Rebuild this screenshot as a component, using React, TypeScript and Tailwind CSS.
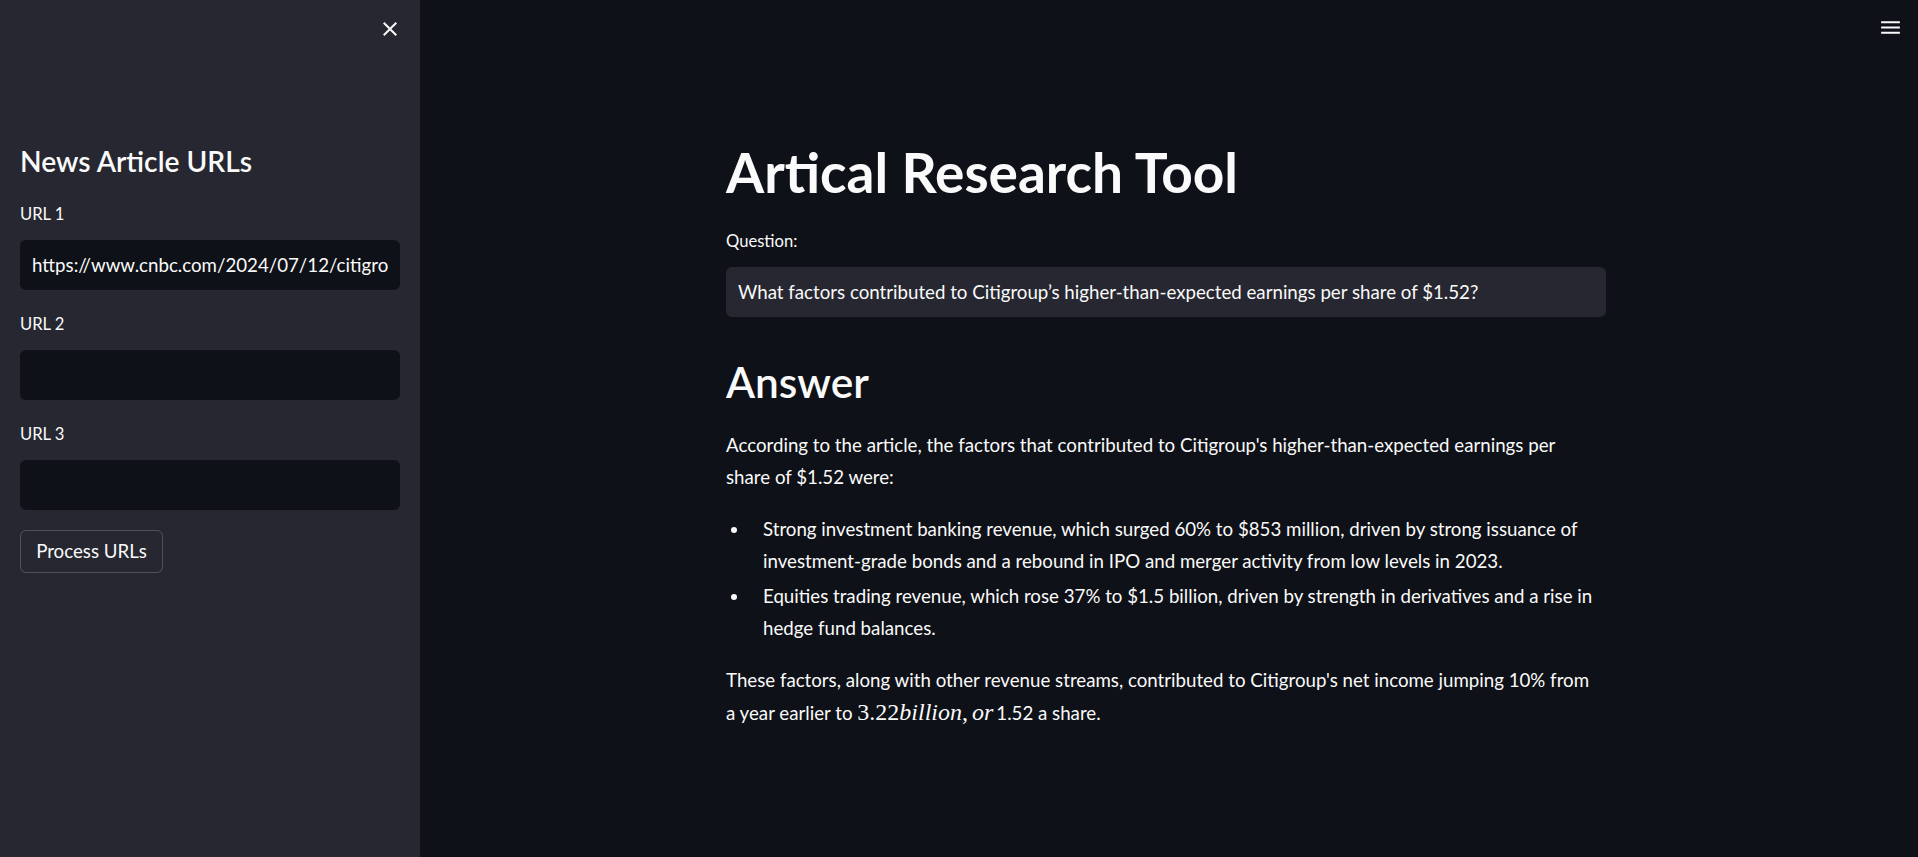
import React from 'react';

const URL_FIELDS = [
  { label: 'URL 1', value: 'https://www.cnbc.com/2024/07/12/citigroup-c-earnings-q2-2024.html' },
  { label: 'URL 2', value: '' },
  { label: 'URL 3', value: '' },
];

const BULLETS = [
  [
    'Strong investment banking revenue, which surged 60% to $853 million, driven by strong issuance of',
    'investment-grade bonds and a rebound in IPO and merger activity from low levels in 2023.',
  ],
  [
    'Equities trading revenue, which rose 37% to $1.5 billion, driven by strength in derivatives and a rise in',
    'hedge fund balances.',
  ],
];

function CloseIcon() {
  return (
    <svg width="24" height="24" viewBox="0 0 24 24" fill="#fafafa">
      <path d="M19 6.41L17.59 5 12 10.59 6.41 5 5 6.41 10.59 12 5 17.59 6.41 19 12 13.41 17.59 19 19 17.59 13.41 12z" />
    </svg>
  );
}

function MenuIcon() {
  return (
    <svg width="25" height="25" viewBox="0 0 24 24" fill="#fafafa">
      <path d="M3 18h18v-2H3v2zm0-5h18v-2H3v2zm0-7v2h18V6H3z" />
    </svg>
  );
}

export default function App() {
  return (
    <div className="flex h-[857px] w-full overflow-hidden bg-[#0e1117] font-['Lato',sans-serif] text-[#fafafa]">
      {/* Sidebar */}
      <aside className="flex w-[420px] shrink-0 flex-col bg-[#262730] px-5">
        <div className="-mr-[2px] flex justify-end pt-[17px]">
          <CloseIcon />
        </div>

        <h2 className="mt-[102px] text-[28.2px] font-semibold leading-[36px]">News Article URLs</h2>

        <div className="mt-[25px] flex flex-col gap-6">
          {URL_FIELDS.map((f) => (
            <div key={f.label} className="flex flex-col gap-[15px]">
              <label className="text-[16.6px] leading-[21px]">{f.label}</label>
              <div className="flex h-[50px] items-center rounded-[6px] bg-[#0e1117] px-3">
                <div className="flex-1 overflow-hidden whitespace-nowrap text-[18.7px]">{f.value}</div>
              </div>
            </div>
          ))}
        </div>

        <button className="mt-5 h-[43px] w-[143px] rounded-[6px] border border-[#fafafa]/20 text-[18.7px]">
          Process URLs
        </button>
      </aside>

      {/* Main */}
      <main className="flex flex-1 flex-col">
        <div className="flex h-[56px] justify-end pt-[15px] pr-[15px]">
          <MenuIcon />
        </div>

        <div className="flex justify-center pr-[6px]">
          <div className="w-[880px] pt-[83px]">
            <h1 className="text-[55px] font-bold leading-[66px]">Artical Research Tool</h1>

            <div className="mt-[22px] text-[16.6px] leading-[28px]">Question:</div>
            <div className="mt-[12px] flex h-[50px] items-center rounded-[6px] bg-[#262730] px-3 text-[18.7px]">
              What factors contributed to Citigroup’s higher-than-expected earnings per share of $1.52?
            </div>

            <h2 className="mt-[38px] text-[42.4px] font-semibold leading-[54px]">Answer</h2>

            <div className="mt-[20px] text-[18.7px] leading-[32px]">
              <p>
                According to the article, the factors that contributed to Citigroup's higher-than-expected earnings per
                <br />
                share of $1.52 were:
              </p>
              <ul className="mt-5 flex flex-col gap-[3px]">
                {BULLETS.map(([first, second]) => (
                  <li key={first} className="flex">
                    <span className="w-[37px] shrink-0 pl-[5px] pt-[14px]">
                      <span className="block h-[6px] w-[6px] rounded-full bg-[#fafafa]" />
                    </span>
                    <span>
                      {first}
                      <br />
                      {second}
                    </span>
                  </li>
                ))}
              </ul>
              <p className="mt-5">
                These factors, along with other revenue streams, contributed to Citigroup's net income jumping 10% from
                <br />
                a year earlier to{' '}
                <span className="pr-[3px] font-['Liberation_Serif',serif] text-[24px]">
                  3.22<i>billion</i>,<span className="ml-[4px]" />
                  <i>or</i>
                </span>
                1.52 a share.
              </p>
            </div>
          </div>
        </div>
      </main>
    </div>
  );
}
